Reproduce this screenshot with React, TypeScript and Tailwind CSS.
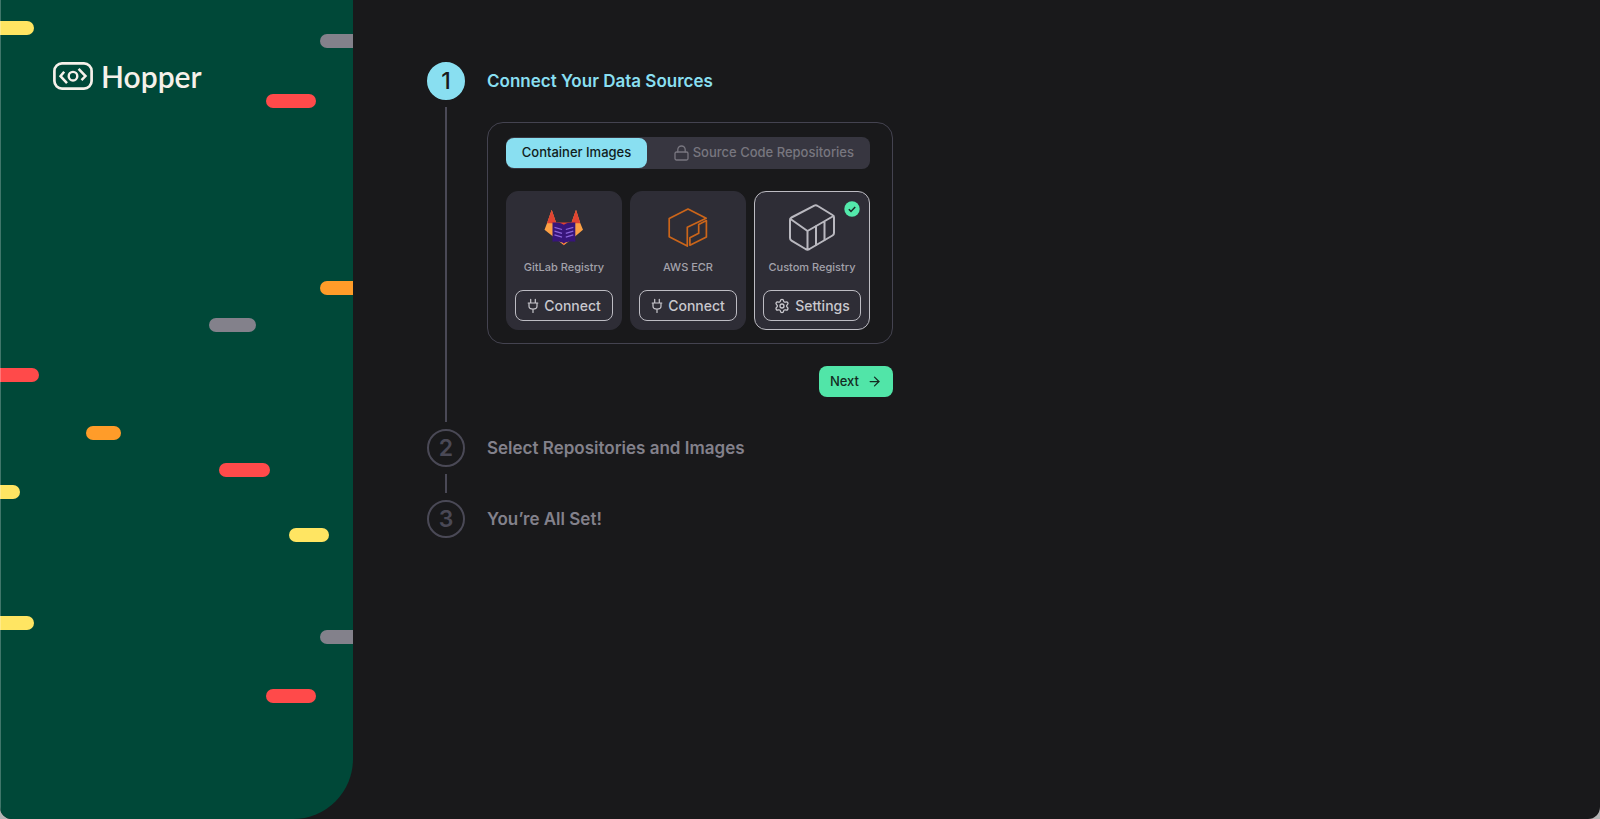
import type { ReactNode } from "react";
import { ArrowRight, Settings } from "lucide-react";

type Dash = { x: number; y: number; w: number; color: string };

const YELLOW = "#ffe562";
const GRAY = "#83818b";
const RED = "#ff4a4a";
const ORANGE = "#ff9c29";

const dashes: Dash[] = [
  { x: -20, y: 21, w: 54, color: YELLOW },
  { x: 320, y: 34, w: 50, color: GRAY },
  { x: 266, y: 94, w: 50, color: RED },
  { x: 320, y: 281, w: 50, color: ORANGE },
  { x: 209, y: 318, w: 47, color: GRAY },
  { x: -20, y: 368, w: 59, color: RED },
  { x: 86, y: 426, w: 35, color: ORANGE },
  { x: 219, y: 463, w: 51, color: RED },
  { x: -20, y: 485, w: 40, color: YELLOW },
  { x: 289, y: 528, w: 40, color: YELLOW },
  { x: -20, y: 616, w: 54, color: YELLOW },
  { x: 320, y: 630, w: 50, color: GRAY },
  { x: 266, y: 689, w: 50, color: RED },
];

function Confetti() {
  return (
    <svg className="absolute inset-0 h-full w-full" aria-hidden="true">
      {dashes.map((d) => (
        <rect key={`${d.x}-${d.y}`} x={d.x} y={d.y} width={d.w} height={14} rx={7} fill={d.color} />
      ))}
      <rect width="1" height="100%" fill="#ffffff" opacity="0.25" />
    </svg>
  );
}

function Logo() {
  return (
    <div className="relative flex items-center gap-2 text-[#f6f1ea]">
      <svg width="40" height="28" viewBox="0 0 40 28" fill="none" stroke="currentColor" aria-hidden="true">
        <rect x="1.4" y="1.4" width="37.2" height="25.2" rx="7.6" strokeWidth="2.7" />
        <circle cx="20" cy="14.2" r="4.3" strokeWidth="2.4" />
        <path d="M11.200 9.800 7.500 14.200 14 21.200" strokeWidth="2.5" />
        <path d="M25.600 6.800 32.500 14.100 28.500 18.200" strokeWidth="2.5" />
      </svg>
      <span className="font-['Lato',sans-serif] text-[30px] leading-9 font-semibold">Hopper</span>
    </div>
  );
}

function GitLabIcon() {
  return (
    <svg width="40" height="37" viewBox="0 0 40 37" aria-hidden="true">
      <path d="M7.700 .7 12.300 14.200H27.300L32 .7 36.300 14.200 39 20.800 31 27.500 19.800 36.200 9 27.500 .5 20.800 3 14.200Z" fill="#fca044" />
      <path d="M7.700 .7 3 14.200H12.300ZM32 .7 27.300 14.200H36.300Z" fill="#e14432" />
      <path d="M11 13.500H28.500L19.800 36.200Z" fill="#e14432" />
      <path d="M8.500 13.600C13 13 17 13.700 19.800 15.700 22.600 13.700 27 13 31.300 13.600V32.800C27 32.100 22.600 32.600 19.800 34.300 17 32.600 13 32.100 8.500 32.800Z" fill="#37157a" />
      <path d="m10.500 18.300 7.500 2.200m-7.500 1.600 7.500 2.200m-7.500 1.600 7.500 2.200M29.300 18.300l-7.500 2.200M29.300 22.100l-7.500 2.200M29.300 25.900l-7.500 2.200" stroke="#8a63d8" strokeWidth="1.200" />
    </svg>
  );
}

function EcrIcon() {
  return (
    <svg width="40" height="40" viewBox="0 0 40 40" fill="none" stroke="#cb651a" strokeWidth="1.700" strokeLinejoin="round" aria-hidden="true">
      <path d="M20 1 1.200 10.500V28.800L19.300 38V19.300L38.200 10.200Z" />
      <path d="M21.900 37.200V29.700L30.700 25.200V16.400L38.400 12.600V28.900Z" />
    </svg>
  );
}

function ContainerIcon() {
  return (
    <svg width="46" height="47" viewBox="0 0 46 47" fill="none" stroke="#b9b8bf" strokeWidth="2" strokeLinejoin="round" strokeLinecap="round" aria-hidden="true">
      <path d="M25.300 1.600 2.500 13.500Q1 14.300 1 16V34Q1 35.700 2.500 36.600L16.500 45Q18.500 46 20.500 45L43.500 31.500Q45 30.600 45 29V13.500Q45 12 43.500 11L28.800 2Q27 .8 25.300 1.600Z" />
      <path d="M1.500 15 18.500 27 44.500 12M18.500 27V45.500M27 22V41M35.500 17.500V36" />
    </svg>
  );
}

function LockIcon() {
  return (
    <svg width="15" height="16" viewBox="0 0 15 16" fill="none" stroke="currentColor" strokeWidth="1.300" strokeLinecap="round" strokeLinejoin="round" aria-hidden="true">
      <rect x="1" y="7" width="13" height="8" rx="1.500" />
      <path d="M3.800 7V4.700C3.800 2.500 5.400 1 7.500 1S11.200 2.500 11.200 4.700V7" />
    </svg>
  );
}

function PlugIcon() {
  return (
    <svg width="12" height="16" viewBox="0 0 12 16" fill="none" stroke="currentColor" strokeWidth="1.200" strokeLinecap="round" strokeLinejoin="round" aria-hidden="true">
      <path d="M3.700 1.300V5M8.300 1.300V5M1.200 5H10.800M2 5V8.200Q2 11 6 11 10 11 10 8.200V5M6 11V14.500" />
    </svg>
  );
}

function Registry({ name, icon, action, actionIcon, selected = false }: {
  name: string;
  icon: ReactNode;
  action: string;
  actionIcon: ReactNode;
  selected?: boolean;
}) {
  return (
    <article
      className={`relative flex flex-1 flex-col items-center rounded-xl border bg-[#2e2d36] px-2 pb-2 ${selected ? "border-[#bdbcc3]" : "border-[#2e2d36]"}`}
    >
      {selected && (
        <svg className="absolute top-[9px] right-[9px]" width="16" height="16" viewBox="0 0 16 16" role="img" aria-label="Connected">
          <circle cx="8" cy="8" r="7.700" fill="#53e9ab" />
          <path d="m4.800 8.200 2.200 2.200 4.200-4.500" fill="none" stroke="#1b2a28" strokeWidth="1.500" />
        </svg>
      )}
      <div className="flex h-[67px] items-center justify-center pt-1">{icon}</div>
      <h3 className="text-[11px] leading-4 font-medium whitespace-nowrap text-[#a3a2ab]">{name}</h3>
      <button
        type="button"
        className="mt-[15px] flex h-[31px] w-full items-center justify-center gap-[5px] rounded-lg border border-[#bdbcc3] text-sm font-medium text-[#c9c8ce]"
      >
        {actionIcon}
        {action}
      </button>
    </article>
  );
}

function Step({ number, title, active = false, last = false, children }: {
  number: number;
  title: string;
  active?: boolean;
  last?: boolean;
  children?: ReactNode;
}) {
  return (
    <li className="flex gap-[22px]">
      <div className="flex w-[38px] shrink-0 flex-col items-center">
        <span
          className={`flex size-[38px] shrink-0 items-center justify-center rounded-full border-2 text-[23px] ${active ? "border-[#89dff1] bg-[#89dff1] font-medium text-[#19191b]" : "border-[#4a4956] font-semibold text-[#4a4956]"}`}
        >
          {number}
        </span>
        {!last && <span className="my-[7px] min-h-[19px] w-0.5 flex-1 bg-[#4a4956]" />}
      </div>
      <div className="flex-1">
        <h2 className={`text-[17px] leading-[38px] font-semibold ${active ? "text-[#89dff1]" : "text-[#83818b]"}`}>
          {title}
        </h2>
        {children}
      </div>
    </li>
  );
}

export default function App() {
  return (
    <div className="min-h-screen bg-[#b5b5b5] font-['Inter',sans-serif]">
      <div className="flex min-h-screen overflow-hidden rounded-b-xl bg-[#19191b]">
        <aside className="relative w-[353px] shrink-0 overflow-hidden rounded-br-[60px] bg-[#004838] px-[53px] pt-[58px]">
          <Confetti />
          <Logo />
        </aside>
        <main className="flex-1 pt-[62px] pl-[74px]">
          <ol className="max-w-[466px]">
            <Step number={1} title="Connect Your Data Sources" active>
              <section className="mt-[22px] rounded-2xl border border-[#444350] pt-[14px] pr-[22px] pb-[13px] pl-[18px]">
                <div role="tablist" className="flex h-8 rounded-lg bg-[#373640] py-px text-[13px] font-medium">
                  <button role="tab" aria-selected="true" type="button" className="w-[141px] rounded-lg bg-[#89dff1] text-[#101c20]">
                    Container Images
                  </button>
                  <button role="tab" aria-selected="false" type="button" className="flex flex-1 items-center justify-end gap-1 pr-4 whitespace-nowrap text-[#78767f]">
                    <LockIcon />
                    Source Code Repositories
                  </button>
                </div>
                <div className="mt-[22px] flex gap-2">
                  <Registry name="GitLab Registry" icon={<GitLabIcon />} action="Connect" actionIcon={<PlugIcon />} />
                  <Registry name="AWS ECR" icon={<EcrIcon />} action="Connect" actionIcon={<PlugIcon />} />
                  <Registry name="Custom Registry" icon={<ContainerIcon />} action="Settings" actionIcon={<Settings size={16} strokeWidth={2} />} selected />
                </div>
              </section>
              <div className="flex justify-end pt-[22px] pb-8">
                <button type="button" className="flex h-[31px] items-center gap-2 rounded-lg bg-[#51e5a8] px-[11px] text-[13px] font-medium text-[#142b22]">
                  Next
                  <ArrowRight size={15} strokeWidth={2} />
                </button>
              </div>
            </Step>
            <Step number={2} title="Select Repositories and Images" />
            <Step number={3} title="You’re All Set!" last />
          </ol>
        </main>
      </div>
    </div>
  );
}
